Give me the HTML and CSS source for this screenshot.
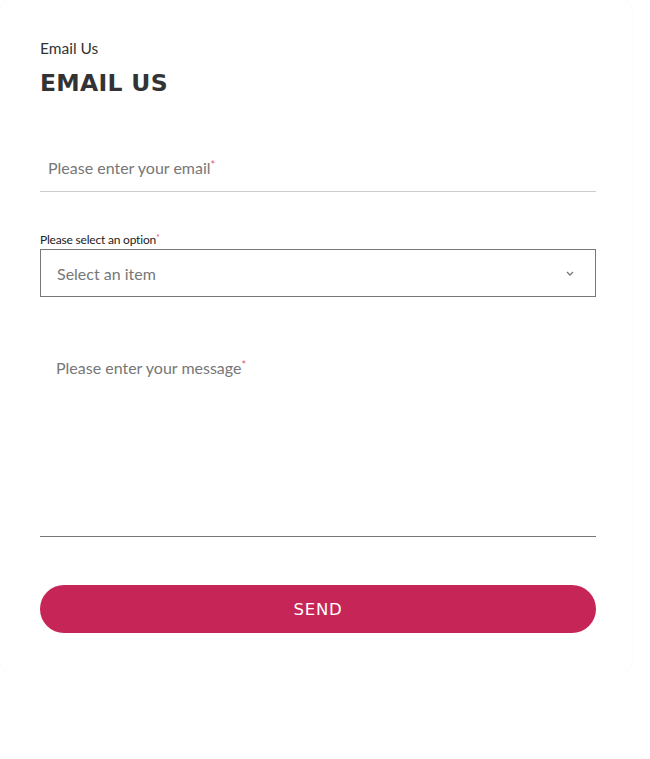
FILE: index.html
```
<!DOCTYPE html>
<html>
<head>
<meta charset="utf-8">
<link rel="stylesheet" href="styles.css">
</head>
<body>
<div class="card">
  <div class="eyebrow">Email Us</div>
  <h1 class="title">EMAIL US</h1>
  <div class="field email">
    <span class="ph">Please enter your email<span class="req">*</span></span>
  </div>
  <div class="label">Please select an option<span class="req">*</span></div>
  <div class="select">
    <span class="ph">Select an item</span>
    <svg class="chev" width="8" height="5" viewBox="0 0 8 5"><path d="M1 1 L4 4 L7 1" fill="none" stroke="#777" stroke-width="1.3"/></svg>
  </div>
  <div class="message">
    <span class="ph">Please enter your message<span class="req">*</span></span>
  </div>
  <button class="send">SEND</button>
</div>
</body>
</html>
```
FILE: styles.css
```
html, body { margin: 0; padding: 0; background: #fff; }
body { font-family: Lato, "Open Sans", sans-serif; }
.card {
  width: 632px;
  height: 672px;
  box-sizing: border-box;
  padding: 38px 36px 0 40px;
  background: #fff;
  border-radius: 12px;
  box-shadow: 0 0 3px rgba(0,0,0,0.045);
}
.eyebrow { font-size: 15.5px; color: #333; line-height: 20px; }
.title {
  margin: 11px 0 0;
  font-family: "DejaVu Sans", sans-serif;
  font-weight: 700;
  font-size: 23.5px;
  letter-spacing: 0.3px;
  color: #333;
  line-height: 28px;
}
.ph { color: #777; font-size: 16px; }
.req { color: #e0577f; font-size: 11px; vertical-align: 5px; }
.field.email {
  margin-top: 52px;
  height: 43px;
  box-sizing: border-box;
  padding: 9px 0 0 8px;
  border-bottom: 1px solid #ccc;
}
.label { margin-top: 39px; font-size: 12px; color: #222; line-height: 14px; letter-spacing: -0.2px; }
.label .req { font-size: 9px; vertical-align: 3px; }
.select {
  margin-top: 2px;
  height: 48px;
  box-sizing: border-box;
  border: 1px solid #777;
  display: flex;
  align-items: center;
  justify-content: space-between;
  padding: 0 21px 0 16px;
}
.message {
  margin-top: 48px;
  height: 192px;
  box-sizing: border-box;
  padding: 13px 0 0 16px;
  border-bottom: 1px solid #777;
}
.send {
  display: block;
  margin-top: 48px;
  width: 556px;
  height: 48px;
  border: none;
  border-radius: 24px;
  background: #c52657;
  color: #fff;
  font-family: "DejaVu Sans", sans-serif;
  font-size: 16.5px;
  letter-spacing: 0.8px;
}
```
